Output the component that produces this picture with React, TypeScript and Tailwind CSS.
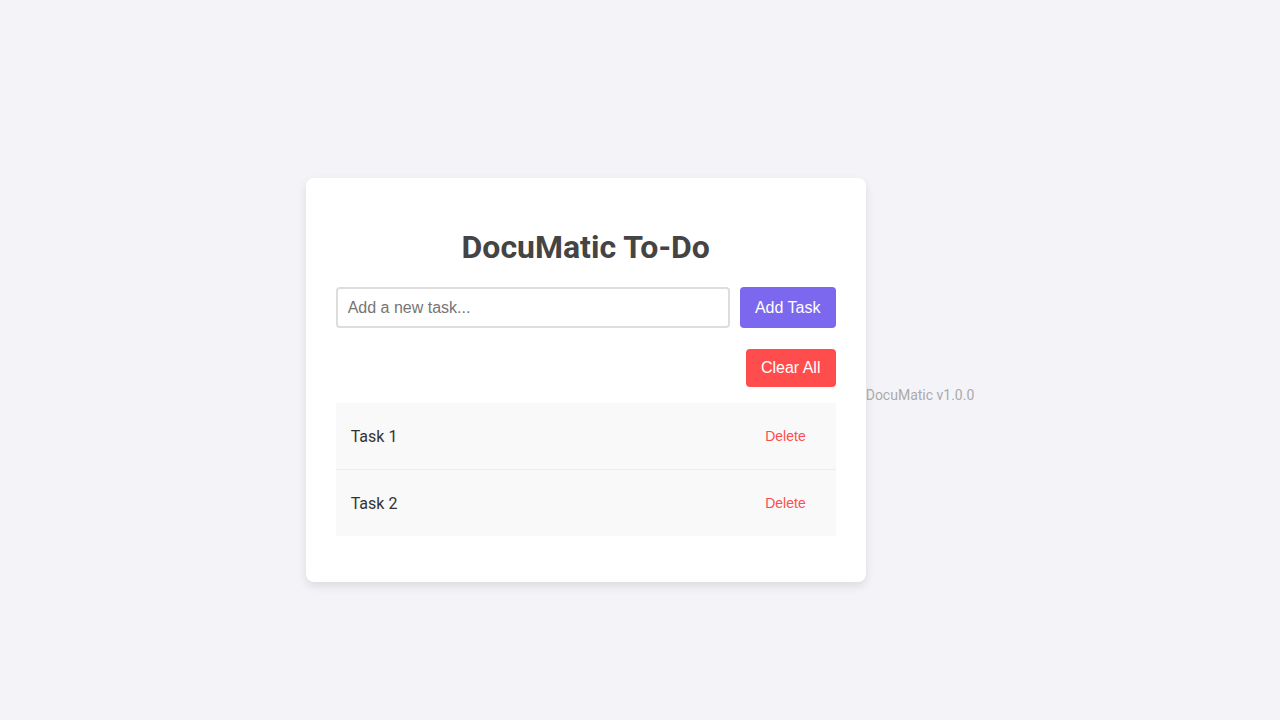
import { useState } from "react";

type Task = { id: number; text: string };

export default function App() {
  const [tasks, setTasks] = useState<Task[]>([
    { id: 1, text: "Task 1" },
    { id: 2, text: "Task 2" },
  ]);
  const [draft, setDraft] = useState("");

  function addTask() {
    const text = draft.trim();
    if (!text) {
      return;
    }
    setTasks((prev) => [...prev, { id: Date.now(), text }]);
    setDraft("");
  }

  return (
    <div className="flex min-h-screen items-center justify-center bg-[#f4f4f8] pt-[40px] font-['Roboto',sans-serif]">
      <div className="w-[560px] rounded-lg bg-white px-[30px] pt-[30px] pb-[30px] shadow-[0_4px_10px_rgba(0,0,0,0.1)]">
        <h1 className="my-[21px] text-center text-[32px] leading-[37px] font-bold text-[#444]">
          DocuMatic To-Do
        </h1>
        <div className="flex gap-[10px]">
          <input
            value={draft}
            onChange={(e) => setDraft(e.target.value)}
            placeholder="Add a new task..."
            className="h-[41px] flex-1 rounded border-2 border-[#ddd] px-[10px] font-['Liberation_Sans',Arial,sans-serif] text-base text-[#333] placeholder:text-[#757575] outline-none"
          />
          <button
            onClick={addTask}
            className="h-[41px] w-[96px] rounded bg-[#7b68ee] font-['Liberation_Sans',Arial,sans-serif] text-base text-white"
          >
            Add Task
          </button>
        </div>
        <div className="mt-[21px] flex justify-end">
          <button
            onClick={() => setTasks([])}
            className="h-[38px] w-[90px] rounded bg-[#ff4d4d] font-['Liberation_Sans',Arial,sans-serif] text-base text-white"
          >
            Clear All
          </button>
        </div>
        <ul className="my-4">
          {tasks.map((task) => (
            <li
              key={task.id}
              className="flex h-[67px] items-center justify-between border-b border-[#eee] bg-[#f9f9f9] pl-[15px] pr-[15px] last:h-[66px] last:border-b-0 text-base text-[#333]"
            >
              <span className="pt-[2px]">{task.text}</span>
              <button
                onClick={() => setTasks((prev) => prev.filter((t) => t.id !== task.id))}
                className="px-[15px] py-[10px] font-['Liberation_Sans',Arial,sans-serif] text-sm text-[#ff4d4d]"
              >
                Delete
              </button>
            </li>
          ))}
        </ul>
      </div>
      <p className="mt-[30px] text-sm text-[#aaa]">DocuMatic v1.0.0</p>
    </div>
  );
}
